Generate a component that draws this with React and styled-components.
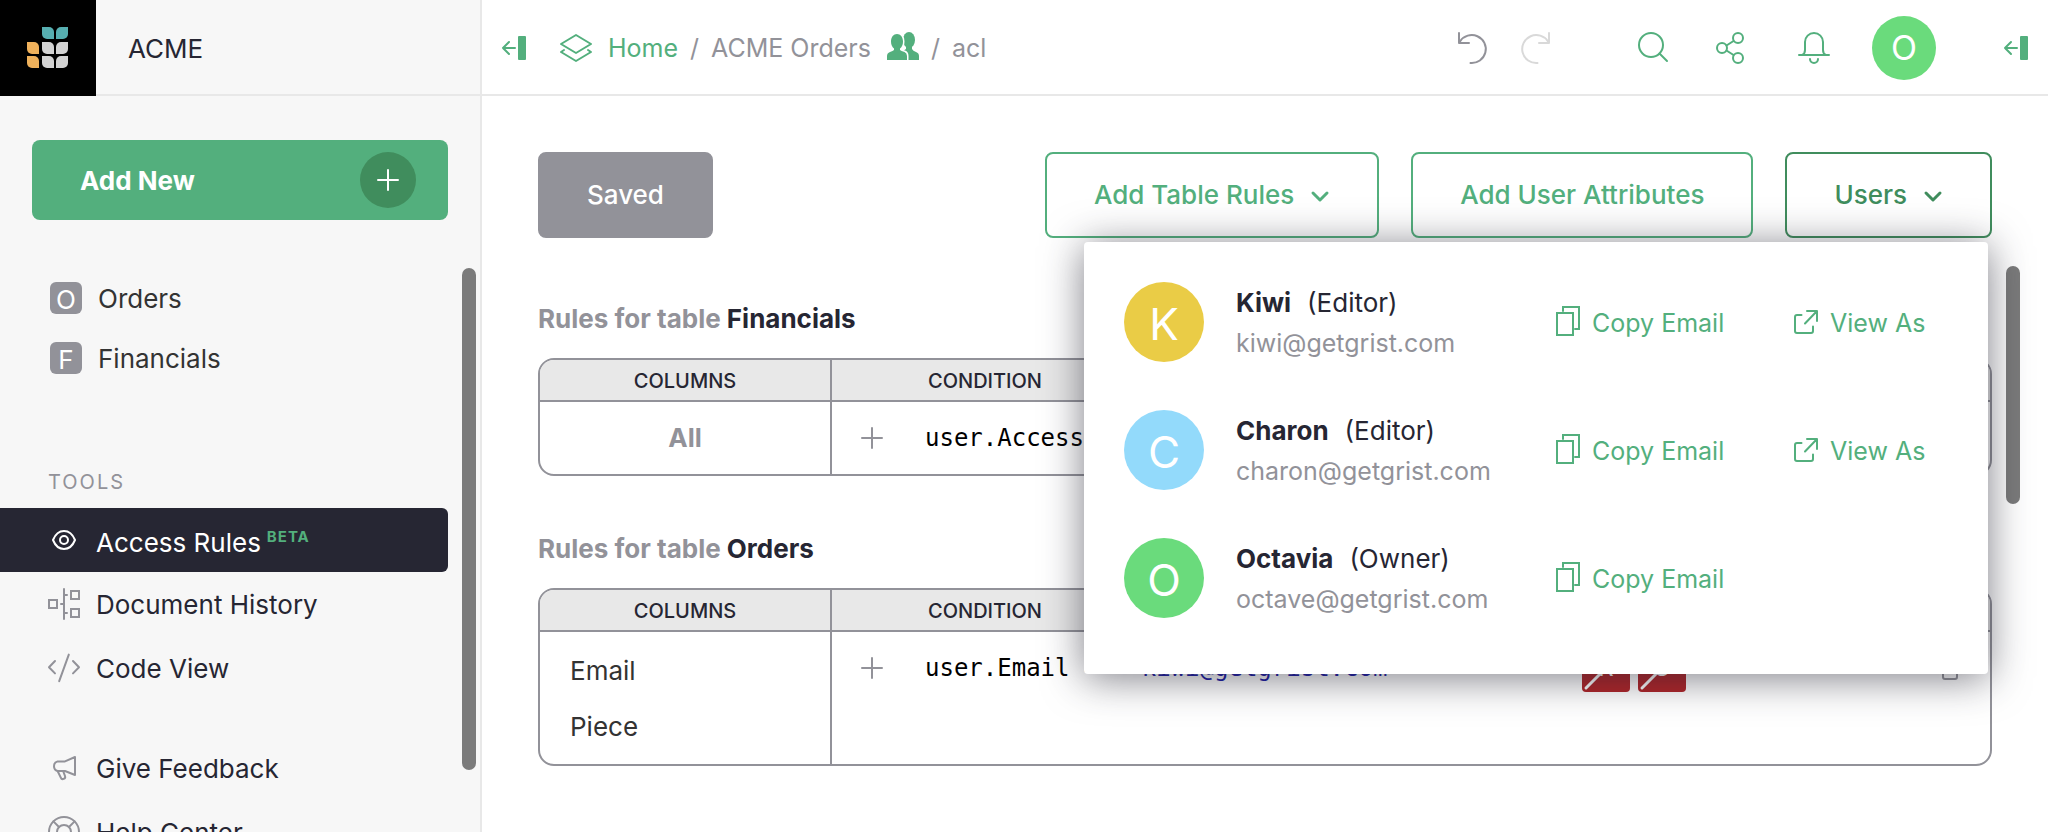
import React from "react";
import styled, { createGlobalStyle, css } from "styled-components";

const c = {
  green: "#53af7d",
  greenDark: "#408d5d",
  dark: "#262633",
  slate: "#929299",
  light: "#f7f7f7",
  border: "#e8e8e8",
};

const GlobalStyle = createGlobalStyle`
  *, *::before, *::after { box-sizing: border-box; }
  body {
    margin: 0;
    overflow: hidden;
    background: #fff;
    color: ${c.dark};
    font-family: Inter, "Liberation Sans", sans-serif;
    font-size: 26px;
    line-height: 32px;
  }
  button { font: inherit; color: inherit; background: none; border: 0; padding: 0; cursor: pointer; }
  a { color: inherit; text-decoration: none; }
  ul { list-style: none; margin: 0; padding: 0; }
  svg { display: block; flex: none; overflow: visible; }
`;

const Shell = styled.div`
  display: grid;
  grid-template-columns: 482px minmax(0, 1fr);
  height: 100vh;
`;

/* Text beside an icon, dropped slightly so its capitals centre on the icon. */
const Label = styled.span`
  padding-top: ${(p) => (p.$raisedTag ? 6 : 2)}px;
`;

/* ---------- left panel ---------- */

const Sidebar = styled.aside`
  display: flex;
  flex-direction: column;
  min-height: 0;
  background: ${c.light};
  border-right: 2px solid ${c.border};
`;

const OrgHeader = styled.header`
  display: flex;
  flex: none;
  height: 96px;
`;

const LogoLink = styled.a`
  display: grid;
  place-items: center;
  width: 96px;
  background: #000;
`;

const OrgName = styled.a`
  display: flex;
  flex: 1;
  align-items: center;
  padding-left: 32px;
  padding-top: 4px;
  border-bottom: 2px solid ${c.border};
`;

const AddNew = styled.button`
  display: flex;
  flex: none;
  align-items: center;
  justify-content: space-between;
  height: 80px;
  margin: 44px 32px 48px;
  padding: 0 32px 0 48px;
  border-radius: 8px;
  background: ${c.green};
  color: #fff;
  font-weight: 700;
`;

const AddCircle = styled.span`
  display: grid;
  place-items: center;
  width: 56px;
  height: 56px;
  border-radius: 50%;
  background: ${c.greenDark};
`;

const SidebarBody = styled.div`
  display: flex;
  flex: 1;
  min-height: 0;
  overflow: hidden;
`;

const SidebarNav = styled.nav`
  flex: 1;
`;

const ScrollTrack = styled.div`
  flex: none;
  width: 14px;
  margin: 0 ${(p) => p.$end}px 0 14px;
  padding-top: ${(p) => p.$top || 0}px;
`;

const ScrollThumb = styled.div`
  height: ${(p) => p.$size};
  border-radius: 7px;
  background: #7b7b7b;
`;

const PageLink = styled.a`
  display: flex;
  align-items: center;
  gap: 16px;
  height: 60px;
  padding-left: 50px;
  color: #333;
`;

const PageInitial = styled.span`
  display: grid;
  place-items: center;
  width: 32px;
  height: 32px;
  padding-top: 2px;
  border-radius: 6px;
  background: ${c.slate};
  color: #fff;
`;

const SectionLabel = styled.h2`
  margin: 0;
  padding: 82px 0 14px 48px;
  color: ${c.slate};
  font-size: 20px;
  font-weight: 400;
  line-height: 24px;
  letter-spacing: 2px;
`;

const ToolLink = styled.a`
  display: flex;
  align-items: center;
  gap: 16px;
  height: 64px;
  padding-left: 48px;
  border-radius: 0 6px 6px 0;
  svg { color: ${c.slate}; }
  ${(p) => p.$active && css`
    background: ${c.dark};
    color: #fff;
    svg { color: #fff; }
  `}
`;

const Beta = styled.sup`
  margin-left: 6px;
  color: ${c.green};
  font-size: 15px;
  font-weight: 700;
  line-height: 0;
  letter-spacing: 1px;
`;

const ToolList = styled.ul`
  & + & { margin-top: 36px; }
`;

/* ---------- top bar ---------- */

const Main = styled.main`
  display: flex;
  flex-direction: column;
  min-width: 0;
  min-height: 0;
`;

const TopBar = styled.header`
  display: flex;
  flex: none;
  align-items: center;
  justify-content: space-between;
  height: 96px;
  padding: 2px 20px 0;
  border-bottom: 2px solid ${c.border};
`;

const BarGroup = styled.div`
  display: flex;
  align-items: center;
  color: ${c.green};
`;

const Breadcrumbs = styled.nav`
  display: flex;
  align-items: center;
  gap: 12px;
  margin-left: 34px;
  color: ${c.slate};
  font-size: 25px;
`;

const HomeLink = styled.a`
  display: flex;
  align-items: center;
  gap: 16px;
  color: ${c.green};
`;

const DocLink = styled.a`
  display: flex;
  align-items: center;
  gap: 16px;
  svg { color: ${c.green}; }
`;

const IconGroup = styled.div`
  display: flex;
  gap: ${(p) => p.$gap}px;
  margin-right: ${(p) => p.$after}px;
`;

const IconButton = styled.button`
  display: grid;
  place-items: center;
  color: ${(p) => p.$color || c.green};
`;

const Avatar = styled.span`
  display: grid;
  place-items: center;
  flex: none;
  width: 64px;
  height: 64px;
  border-radius: 50%;
  background: ${(p) => p.$bg};
  color: #fff;
  font-size: 34px;
`;

const LargeAvatar = styled(Avatar)`
  width: 80px;
  height: 80px;
  padding-top: 4px;
  font-size: 44px;
`;

const ProfileButton = styled.button`
  margin-right: 68px;
`;

/* ---------- rules page ---------- */

const Toolbar = styled.div`
  display: flex;
  flex: none;
  gap: 32px;
  margin: 56px 56px 24px;
`;

const ActionButton = styled.button`
  display: flex;
  align-items: center;
  gap: 16px;
  height: 86px;
  padding: 0 47px;
  border: 2px solid currentColor;
  border-radius: 8px;
  color: ${(p) => (p.$open ? c.greenDark : c.green)};
  font-weight: 500;
  white-space: nowrap;
`;

const SavedButton = styled(ActionButton)`
  margin-right: auto;
  border-color: ${c.slate};
  background: ${c.slate};
  color: #fff;
`;

const MenuAnchor = styled.div`
  position: relative;
`;

const UserMenu = styled.ul`
  position: absolute;
  z-index: 1;
  top: calc(100% + 4px);
  right: 4px;
  width: 904px;
  padding: 16px 0 32px;
  border-radius: 4px;
  background: #fff;
  box-shadow: 0 4px 40px rgba(38, 38, 51, 0.6);
`;

const UserRow = styled.li`
  display: grid;
  grid-template-columns: 80px minmax(0, 1fr) 206px 132px;
  column-gap: 32px;
  align-items: center;
  height: 128px;
  padding: 0 62px 0 40px;
`;

const UserInfo = styled.div`
  padding-top: 2px;
  line-height: 40px;
  white-space: nowrap;
`;

const UserName = styled.strong`
  margin-right: 16px;
  font-weight: 700;
`;

const UserEmail = styled.div`
  color: ${c.slate};
  font-size: 25px;
`;

const MenuAction = styled.button`
  display: flex;
  align-items: center;
  gap: 12px;
  color: ${c.green};
  font-size: 25px;
  white-space: nowrap;
`;

const ScrollArea = styled.div`
  display: flex;
  flex: 1;
  min-height: 0;
  overflow: hidden;
`;

const RulesPane = styled.div`
  flex: 1;
  min-width: 0;
  padding: 42px 0 0 56px;
`;

const RuleSection = styled.section`
  margin-bottom: 58px;
`;

const RuleTitle = styled.h3`
  margin: 0 0 24px;
  color: ${c.slate};
  font-size: 26px;
  font-weight: 700;
  line-height: 30px;
  span { color: ${c.dark}; }
`;

const RuleFrame = styled.div`
  overflow: hidden;
  border: 2px solid ${c.slate};
  border-radius: 16px;
`;

const RuleTable = styled.table`
  width: 100%;
  table-layout: fixed;
  border-collapse: separate;
  border-spacing: 0;

  th {
    height: 42px;
    padding: 2px 0 0;
    border-bottom: 2px solid ${c.slate};
    background: ${c.border};
    font-size: 20px;
    font-weight: 500;
    line-height: 24px;
    text-transform: uppercase;
  }
  th:first-child, td:first-child { border-right: 2px solid ${c.slate}; }
  th:nth-child(2) { padding-left: 96px; text-align: left; }
  th:nth-child(3) { text-align: left; padding-left: 24px; }
  td { height: 72px; padding: 0; vertical-align: top; }
`;

const Col = styled.col`
  width: ${(p) => p.$w};
`;

const AllColumns = styled.div`
  color: ${c.slate};
  font-weight: 700;
  line-height: 72px;
  text-align: center;
`;

const ColumnNames = styled.ul`
  padding: 11px 0 9px 30px;
  color: #333;
  line-height: 56px;
`;

const CellLine = styled.div`
  display: flex;
  align-items: center;
  gap: 8px;
  height: 72px;
  padding-left: ${(p) => p.$indent || 0}px;
`;

const AddCondition = styled(IconButton)`
  width: 80px;
  height: 72px;
`;

const Formula = styled.code`
  padding-left: 5px;
  color: #000;
  font-family: "DejaVu Sans Mono", monospace;
  font-size: 24px;
  white-space: pre;
  span { color: #1a1aa6; }
`;

const DenyButton = styled.button`
  position: relative;
  width: 48px;
  height: 48px;
  border-radius: 4px;
  background: #af2327;
  color: #fff;
  font-size: 24px;
  line-height: 48px;
  svg {
    position: absolute;
    inset: 0;
  }
`;

/* ---------- icons ---------- */

const Icon = ({ w = 32, h = 32, children }) => (
  <svg width={w} height={h} viewBox={`0 0 ${w} ${h}`} fill="none" stroke="currentColor" strokeWidth="2" strokeLinecap="round" strokeLinejoin="round" aria-hidden="true">
    {children}
  </svg>
);

const SmallIcon = ({ children }) => (
  <svg width="32" height="32" viewBox="0 0 16 16" fill="none" stroke="currentColor" strokeLinecap="round" strokeLinejoin="round" aria-hidden="true">
    {children}
  </svg>
);

const leafA = "M0 0H7A5 5 0 0 1 12 5V12H5A5 5 0 0 1 0 7Z";
const leafB = "M12 0H5A5 5 0 0 0 0 5V12H7A5 5 0 0 0 12 7Z";

const Logo = () => (
  <svg width="42" height="42" viewBox="0 0 42 42" aria-hidden="true">
    <g fill="#57afb1">
      <path d={leafA} transform="translate(15 0)" />
      <path d={leafB} transform="translate(29 0)" />
    </g>
    <g fill="#efb15b">
      <path d={leafA} transform="translate(0 15)" />
      <path d={leafA} transform="translate(0 29)" />
    </g>
    <g fill="#d3d3d3">
      <path d={leafA} transform="translate(15 15)" />
      <path d={leafB} transform="translate(29 15)" />
      <path d={leafA} transform="translate(15 29)" />
      <path d={leafB} transform="translate(29 29)" />
    </g>
  </svg>
);

const Plus = () => (
  <Icon w={22} h={22}>
    <path d="M11 1V21M1 11H21" />
  </Icon>
);

const PanelToggle = () => (
  <Icon w={24} h={24}>
    <path d="M13 12H1M7 6L1 12L7 18" />
    <rect x="16" y="0" width="8" height="24" rx="1" fill="currentColor" stroke="none" />
  </Icon>
);

const Layers = () => (
  <Icon>
    <path d="M1 12L16 3L31 12L16 21Z" />
    <path d="M4 18L1 20L16 29L31 20L28 18" />
  </Icon>
);

const frontPerson =
  "M0 28V24Q0 21 3 20Q6 19 7 18V16.500C5 15 4 12.500 4 9.500C4 5 6.500 2 10 2C13.500 2 16 5 16 9.500C16 12.500 15 15 13 16.500V18Q14 19 17.500 20Q20 21 20 24V28Z";

const People = () => (
  <Icon>
    <g fill="currentColor" stroke="none">
      <ellipse cx="22" cy="8" rx="6" ry="8" />
      <path d="M16 28V19L19 17V12H25V17Q26 19 29 20Q32 21 32 24V28Z" />
      <path d={frontPerson} stroke="#fff" strokeWidth="3" />
      <path d={frontPerson} />
    </g>
  </Icon>
);

const Undo = () => (
  <Icon>
    <path d="M3 1V11H13M4 9.500A14 14 0 1 1 14.500 31" />
  </Icon>
);

const Redo = () => (
  <Icon>
    <path d="M29 1V11H19M28 9.500A14 14 0 1 0 17.500 31" />
  </Icon>
);

const Search = () => (
  <Icon>
    <circle cx="15" cy="13" r="12" />
    <path d="M23.500 21.500L31 29" />
  </Icon>
);

const Share = () => (
  <Icon>
    <circle cx="5" cy="16" r="5" />
    <circle cx="21" cy="6" r="5" />
    <circle cx="21" cy="26" r="5" />
    <path d="M9.500 13.500L16.500 9M9.500 18.500L16.500 23" />
  </Icon>
);

const Bell = () => (
  <Icon>
    <path d="M1 23H31M4 23Q7 22 7 18V10A9 9 0 0 1 25 10V18Q25 22 28 23" />
    <path d="M12 27A4 4 0 0 0 20 27" />
  </Icon>
);

const Chevron = () => (
  <svg width="20" height="20" viewBox="0 0 20 20" fill="none" stroke="currentColor" strokeWidth="3" strokeLinecap="round" strokeLinejoin="round" aria-hidden="true">
    <path d="M3 8L10 15L17 8" />
  </svg>
);

const Copy = () => (
  <Icon w={24} h={32}>
    <path d="M1 7H17V29H1ZM7 5V1H23V23H19" strokeLinejoin="miter" />
  </Icon>
);

const OpenIn = () => (
  <Icon w={24} h={24}>
    <path d="M7.500 5H3A2 2 0 0 0 1 7V21A2 2 0 0 0 3 23H17A2 2 0 0 0 19 21V16.500M11 13.500L23 1M13 1H23V11" />
  </Icon>
);

const Trash = () => (
  <Icon>
    <path d="M8 9V25A2 2 0 0 0 10 27H20A2 2 0 0 0 22 25V9M5 7H25M11 7V4H19V7" />
  </Icon>
);

const Eye = () => (
  <SmallIcon>
    <path d="M2.500 8C3.600 5.300 5.600 3.500 8 3.500S12.400 5.300 13.500 8C12.400 10.700 10.400 12.500 8 12.500S3.600 10.700 2.500 8Z" />
    <circle cx="8" cy="8" r="2" />
  </SmallIcon>
);

const History = () => (
  <SmallIcon>
    <path d="M.5 6H4.500V10H.5ZM11.500 1.500H15.500V5.500H11.500ZM11.500 10.500H15.500V14.500H11.500ZM8 .5V15.500M8 3.500H9.500M8 12.500H9.500M6.500 8H8" strokeLinejoin="miter" />
  </SmallIcon>
);

const Code = () => (
  <SmallIcon>
    <path d="M3.500 4.500L.5 7.600L3.500 10.700M12.500 4.500L15.500 7.600L12.500 10.700M10.400 1.300L5.600 14.600" />
  </SmallIcon>
);

const Megaphone = () => (
  <SmallIcon>
    <path d="M13.500 2.500V11.500L8.500 9.500H4.800A2.500 2.500 0 0 1 4.800 4.700H8.500Z" />
    <path d="M4.800 9.500L6.400 12.800A1.100 1.100 0 0 0 8.500 12L7.600 9.600" />
  </SmallIcon>
);

const LifeRing = () => (
  <SmallIcon>
    <circle cx="8" cy="8" r="7.500" />
    <circle cx="8" cy="8" r="3.500" />
    <path d="M2.700 2.700L5.500 5.500M13.300 2.700L10.500 5.500M2.700 13.300L5.500 10.500M13.300 13.300L10.500 10.500" />
  </SmallIcon>
);

/* ---------- data ---------- */

const pages = ["Orders", "Financials"];

const tools = [
  { label: "Access Rules", icon: Eye, active: true, beta: true },
  { label: "Document History", icon: History },
  { label: "Code View", icon: Code },
];

const support = [
  { label: "Give Feedback", icon: Megaphone },
  { label: "Help Center", icon: LifeRing },
];

const users = [
  { name: "Kiwi", role: "Editor", email: "kiwi@getgrist.com", color: "#eacc46", viewAs: true },
  { name: "Charon", role: "Editor", email: "charon@getgrist.com", color: "#93dafb", viewAs: true },
  { name: "Octavia", role: "Owner", email: "octave@getgrist.com", color: "#6adb7c" },
];

const Tools = ({ items }) => (
  <ToolList>
    {items.map(({ label, icon: ToolIcon, active, beta }) => (
      <li key={label}>
        <ToolLink href="#" $active={active}>
          <ToolIcon />
          <Label $raisedTag={beta}>
            {label}
            {beta && <Beta>BETA</Beta>}
          </Label>
        </ToolLink>
      </li>
    ))}
  </ToolList>
);

const Rules = ({ table, columns, formula, denied, removable }) => (
  <RuleSection>
    <RuleTitle>
      Rules for table <span>{table}</span>
    </RuleTitle>
    <RuleFrame>
      <RuleTable>
        <colgroup>
          <Col $w="292px" />
          <Col $w="auto" />
          <Col $w="352px" />
          <Col $w="80px" />
        </colgroup>
        <thead>
          <tr>
            <th scope="col">Columns</th>
            <th scope="col">Condition</th>
            <th scope="col">Permissions</th>
            <th />
          </tr>
        </thead>
        <tbody>
          <tr>
            <td>
              {columns ? (
                <ColumnNames>
                  {columns.map((name) => (
                    <li key={name}>{name}</li>
                  ))}
                </ColumnNames>
              ) : (
                <AllColumns>All</AllColumns>
              )}
            </td>
            <td>
              <CellLine>
                <AddCondition $color={c.slate} aria-label="Add condition">
                  <Plus />
                </AddCondition>
                <Formula>{formula}</Formula>
              </CellLine>
            </td>
            <td>
              <CellLine $indent={24}>
                {denied.map((letter) => (
                  <DenyButton key={letter}>
                    {letter}
                    <Icon w={48} h={48}>
                      <path d="M4 44L44 4" strokeWidth="3" />
                    </Icon>
                  </DenyButton>
                ))}
              </CellLine>
            </td>
            <td>
              {removable && (
                <CellLine $indent={25}>
                  <IconButton $color={c.slate} aria-label="Delete rule">
                    <Trash />
                  </IconButton>
                </CellLine>
              )}
            </td>
          </tr>
        </tbody>
      </RuleTable>
    </RuleFrame>
  </RuleSection>
);

export default function App() {
  return (
    <>
      <GlobalStyle />
      <Shell>
        <Sidebar>
          <OrgHeader>
            <LogoLink href="#" aria-label="Grist home">
              <Logo />
            </LogoLink>
            <OrgName href="#">ACME</OrgName>
          </OrgHeader>
          <AddNew>
            <Label>Add New</Label>
            <AddCircle>
              <Plus />
            </AddCircle>
          </AddNew>
          <SidebarBody>
            <SidebarNav>
              <ul>
                {pages.map((page) => (
                  <li key={page}>
                    <PageLink href="#">
                      <PageInitial>{page[0]}</PageInitial>
                      <Label>{page}</Label>
                    </PageLink>
                  </li>
                ))}
              </ul>
              <SectionLabel>TOOLS</SectionLabel>
              <Tools items={tools} />
              <Tools items={support} />
            </SidebarNav>
            <ScrollTrack $end={4}>
              <ScrollThumb $size="89%" />
            </ScrollTrack>
          </SidebarBody>
        </Sidebar>

        <Main>
          <TopBar>
            <BarGroup>
              <IconButton aria-label="Toggle left panel">
                <PanelToggle />
              </IconButton>
              <Breadcrumbs aria-label="Breadcrumbs">
                <HomeLink href="#">
                  <Layers />
                  Home
                </HomeLink>
                <span>/</span>
                <DocLink href="#">
                  ACME Orders
                  <People />
                </DocLink>
                <span>/</span>
                <span>acl</span>
              </Breadcrumbs>
            </BarGroup>
            <BarGroup>
              <IconGroup $gap={32} $after={84}>
                <IconButton $color={c.slate} aria-label="Undo">
                  <Undo />
                </IconButton>
                <IconButton $color="#d9d9d9" aria-label="Redo">
                  <Redo />
                </IconButton>
              </IconGroup>
              <IconGroup $gap={49} $after={42}>
                <IconButton aria-label="Search">
                  <Search />
                </IconButton>
                <IconButton aria-label="Share">
                  <Share />
                </IconButton>
                <IconButton aria-label="Notifications">
                  <Bell />
                </IconButton>
              </IconGroup>
              <ProfileButton aria-label="Profile">
                <Avatar $bg="#6adb7c">O</Avatar>
              </ProfileButton>
              <IconButton aria-label="Toggle right panel">
                <PanelToggle />
              </IconButton>
            </BarGroup>
          </TopBar>

          <Toolbar>
            <SavedButton>Saved</SavedButton>
            <ActionButton>
              Add Table Rules
              <Chevron />
            </ActionButton>
            <ActionButton>Add User Attributes</ActionButton>
            <MenuAnchor>
              <ActionButton $open aria-expanded="true">
                Users
                <Chevron />
              </ActionButton>
              <UserMenu>
                {users.map((user) => (
                  <UserRow key={user.name}>
                    <LargeAvatar $bg={user.color}>{user.name[0]}</LargeAvatar>
                    <UserInfo>
                      <UserName>{user.name}</UserName>({user.role})
                      <UserEmail>{user.email}</UserEmail>
                    </UserInfo>
                    <MenuAction>
                      <Copy />
                      <Label>Copy Email</Label>
                    </MenuAction>
                    {user.viewAs && (
                      <MenuAction>
                        <OpenIn />
                        <Label>View As</Label>
                      </MenuAction>
                    )}
                  </UserRow>
                ))}
              </UserMenu>
            </MenuAnchor>
          </Toolbar>

          <ScrollArea>
            <RulesPane>
              <Rules table="Financials" formula="user.Access" denied={[]} />
              <Rules
                table="Orders"
                columns={["Email", "Piece"]}
                formula={
                  <>
                    user.Email == <span>"kiwi@getgrist.com"</span>
                  </>
                }
                denied={["R", "U"]}
                removable
              />
            </RulesPane>
            <ScrollTrack $end={28} $top={4}>
              <ScrollThumb $size="42%" />
            </ScrollTrack>
          </ScrollArea>
        </Main>
      </Shell>
    </>
  );
}
